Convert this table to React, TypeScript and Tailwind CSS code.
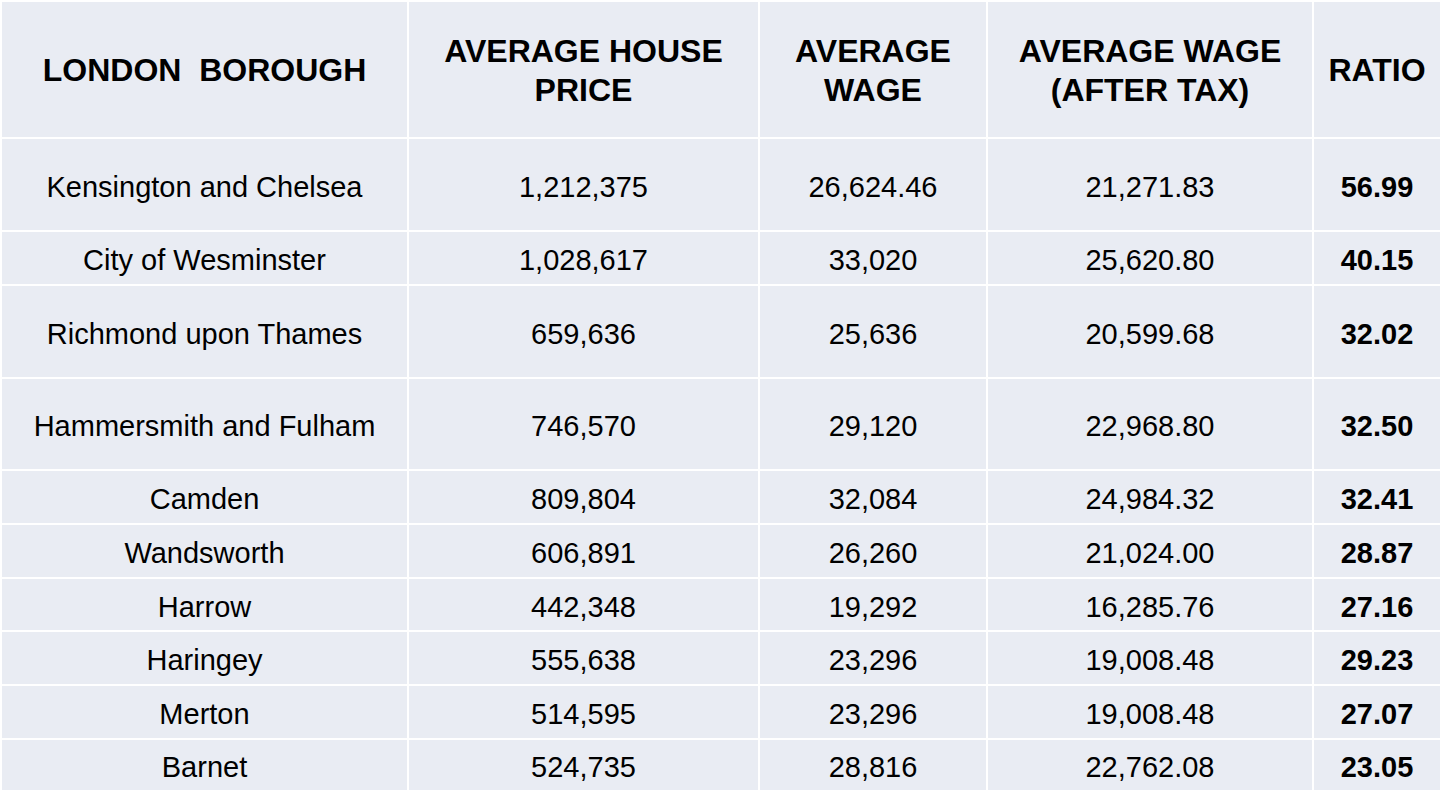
import React from "react";

const rows: [string, string, string, string, string][] = [
  ["Kensington and Chelsea", "1,212,375", "26,624.46", "21,271.83", "56.99"],
  ["City of Wesminster", "1,028,617", "33,020", "25,620.80", "40.15"],
  ["Richmond upon Thames", "659,636", "25,636", "20,599.68", "32.02"],
  ["Hammersmith and Fulham", "746,570", "29,120", "22,968.80", "32.50"],
  ["Camden", "809,804", "32,084", "24,984.32", "32.41"],
  ["Wandsworth", "606,891", "26,260", "21,024.00", "28.87"],
  ["Harrow", "442,348", "19,292", "16,285.76", "27.16"],
  ["Haringey", "555,638", "23,296", "19,008.48", "29.23"],
  ["Merton", "514,595", "23,296", "19,008.48", "27.07"],
  ["Barnet", "524,735", "28,816", "22,762.08", "23.05"],
];

const headers = [
  ["LONDON  BOROUGH"],
  ["AVERAGE HOUSE", "PRICE"],
  ["AVERAGE", "WAGE"],
  ["AVERAGE WAGE", "(AFTER TAX)"],
  ["RATIO"],
];

export default function App() {
  return (
    <div
      className="w-[1442px] h-[801px] bg-white pt-[2px] pl-[2px] overflow-hidden"
      style={{ fontFamily: '"Liberation Sans", Arial, sans-serif' }}
    >
      <div className="grid grid-cols-[405px_349px_226px_324px_126px] grid-rows-[135px_91px_52px_91px_90px_52px_52px_51px_52px_52px_50px] gap-[2px] w-[1440px] text-black">
        {headers.map((h, i) => (
          <div
            key={"h" + i}
            className="bg-[#e9ecf3] flex flex-col items-center justify-center text-center font-bold text-[32px] leading-[39px] whitespace-pre pt-[2px]"
          >
            {h.map((line, j) => (
              <span key={j}>{line}</span>
            ))}
          </div>
        ))}
        {rows.map((r, ri) =>
          r.map((c, ci) => (
            <div
              key={ri + "-" + ci}
              className={
                "bg-[#e9ecf3] flex items-center justify-center text-[29px] leading-none whitespace-nowrap pt-[5px]" +
                (ci === 4 ? " font-bold" : "")
              }
            >
              {c}
            </div>
          ))
        )}
      </div>
    </div>
  );
}
